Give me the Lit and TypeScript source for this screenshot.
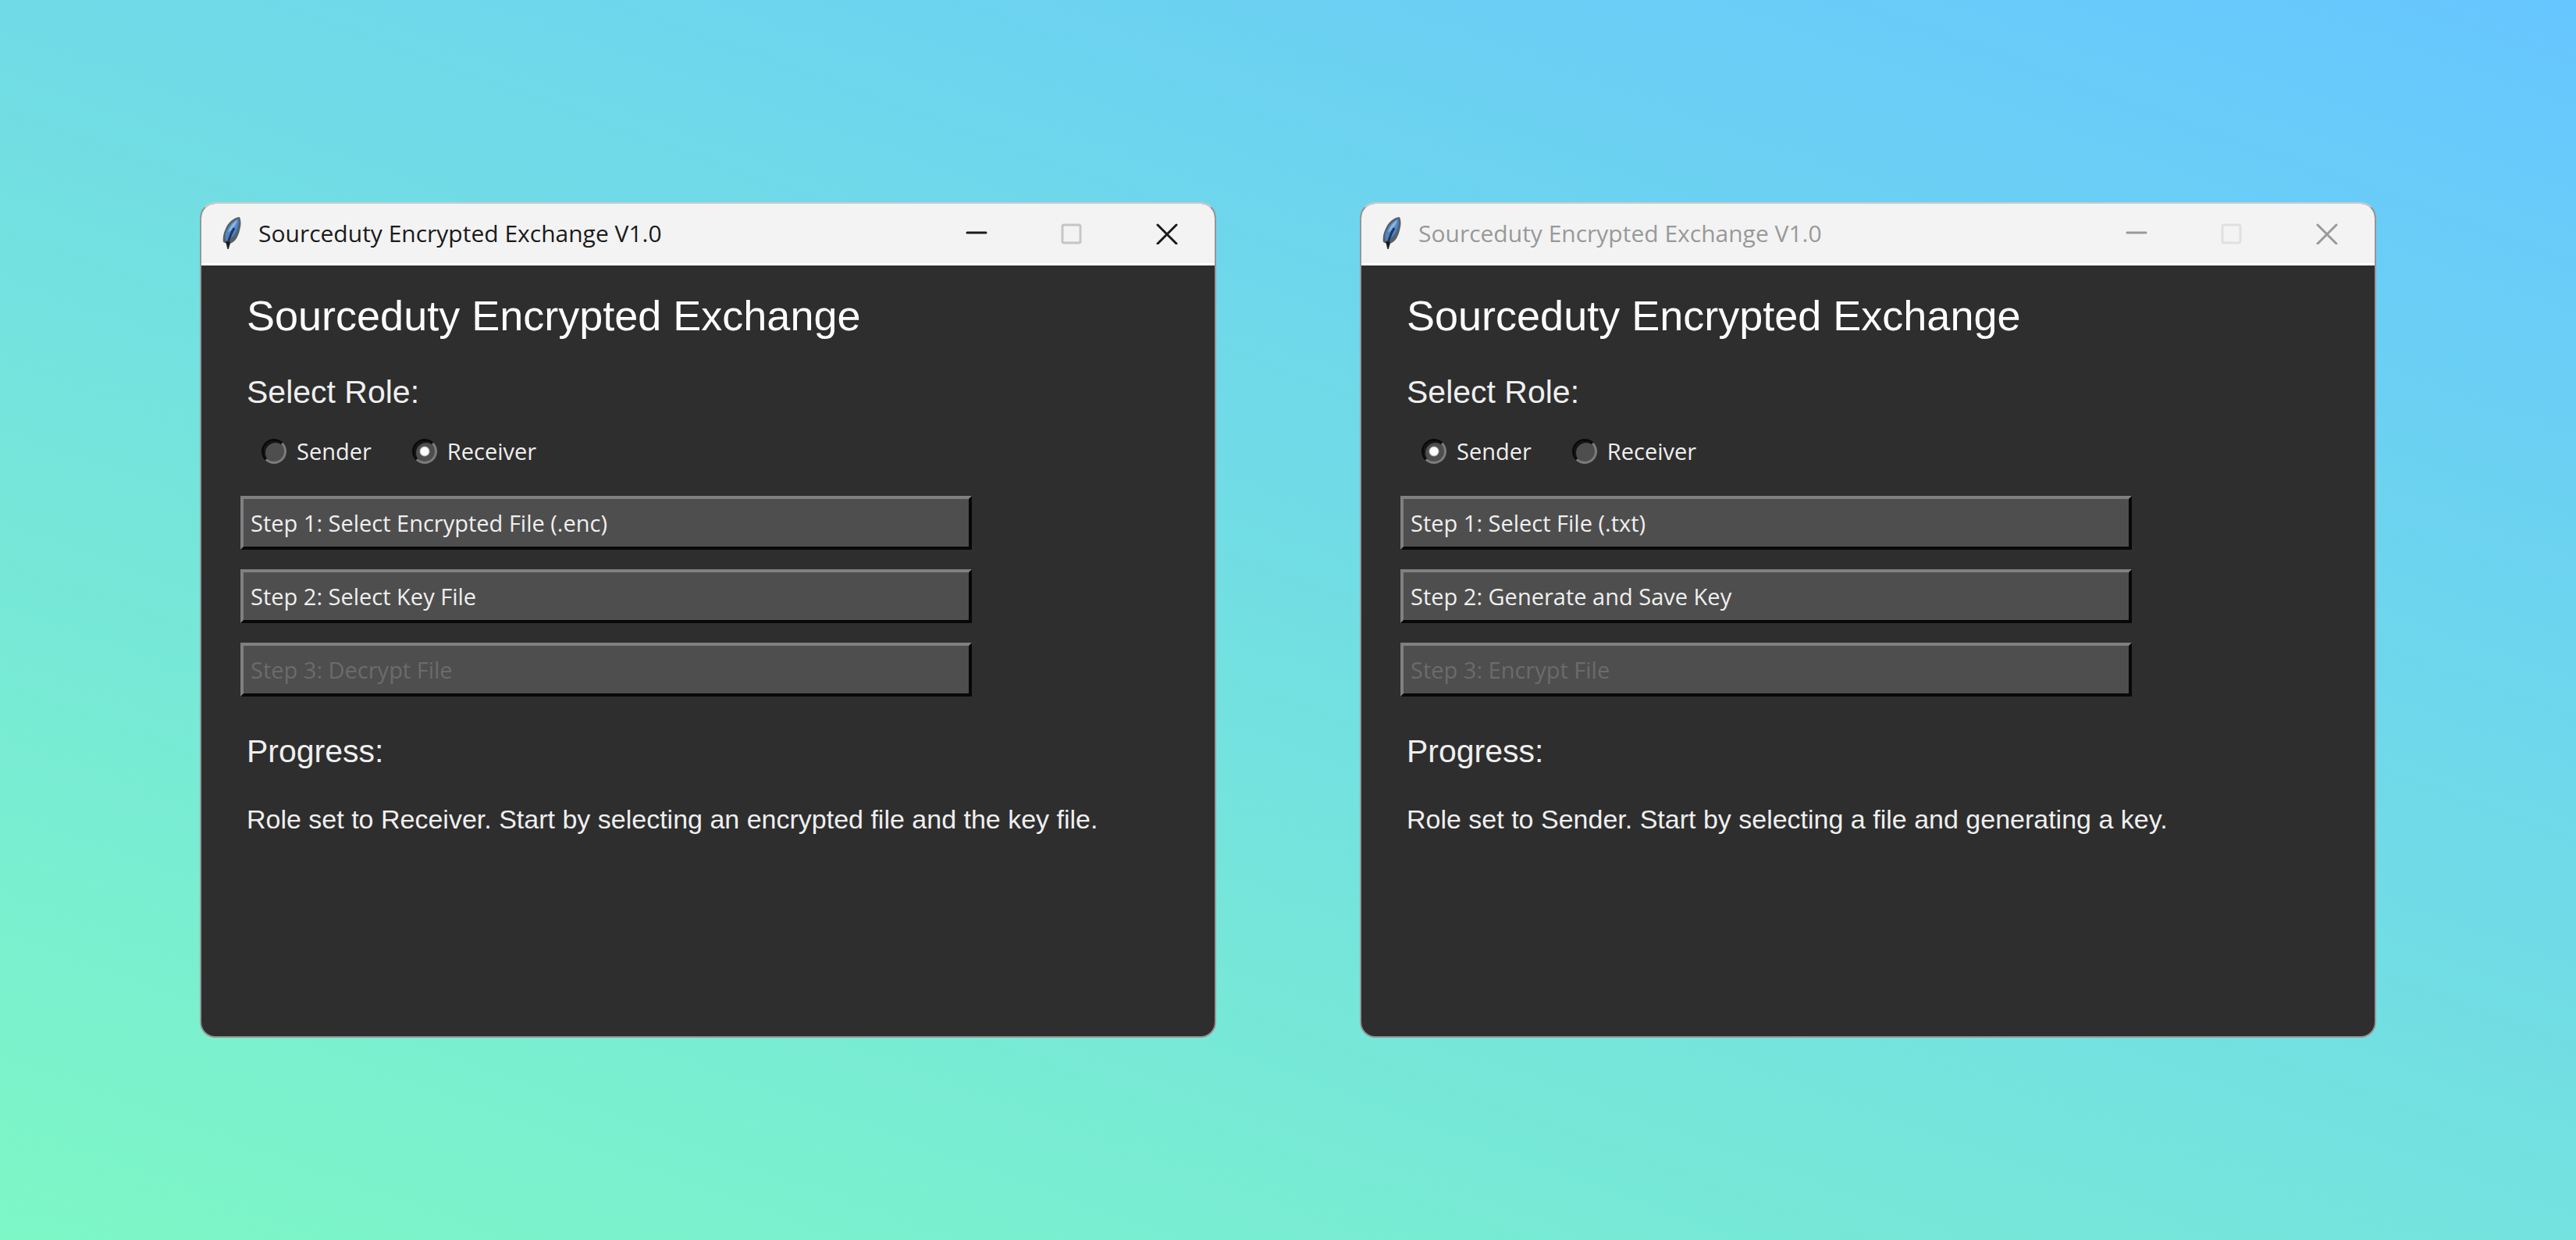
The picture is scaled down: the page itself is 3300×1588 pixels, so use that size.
import { LitElement, html, css } from "lit";
import { customElement, property, state } from "lit/decorators.js";
import { classMap } from "lit/directives/class-map.js";

type Role = "sender" | "receiver";

const ROLES: { id: Role; label: string }[] = [
  { id: "sender", label: "Sender" },
  { id: "receiver", label: "Receiver" },
];

const STEPS: Record<Role, string[]> = {
  sender: ["Step 1: Select File (.txt)", "Step 2: Generate and Save Key", "Step 3: Encrypt File"],
  receiver: ["Step 1: Select Encrypted File (.enc)", "Step 2: Select Key File", "Step 3: Decrypt File"],
};

const STATUS: Record<Role, string> = {
  sender: "Role set to Sender. Start by selecting a file and generating a key.",
  receiver: "Role set to Receiver. Start by selecting an encrypted file and the key file.",
};

@customElement("exchange-window")
class ExchangeWindow extends LitElement {
  static styles = css`
    :host {
      display: block;
      min-width: 0;
    }
    .window {
      border: 2px solid #969696;
      border-top-color: #cccccc;
      border-radius: 20px;
      overflow: hidden;
      background: #2e2e2e;
      color: #efefef;
      font-family: "Liberation Sans", Arial, sans-serif;
    }
    .titlebar {
      display: flex;
      align-items: stretch;
      height: 76px;
      padding-left: 27px;
      background: #f3f3f3;
      border-bottom: 3px solid #ffffff;
      color: #1b1b1b;
      font-family: "Open Sans", "Noto Sans", sans-serif;
    }
    .name {
      display: flex;
      align-items: center;
      gap: 22px;
      flex: 1;
      min-width: 0;
      font-size: 30px;
      line-height: 40px;
      white-space: nowrap;
    }
    .feather {
      flex: none;
      width: 24px;
      height: 42px;
    }
    .control {
      display: flex;
      align-items: center;
      justify-content: center;
      width: 122px;
      padding: 0;
      border: 0;
      background: none;
      color: inherit;
    }
    .control svg {
      width: 28px;
      height: 28px;
      fill: none;
      stroke: currentColor;
      stroke-width: 3;
      stroke-linecap: round;
    }
    .control:disabled {
      color: #c6c6c6;
    }
    .inactive {
      color: #999999;
    }
    .inactive .control:disabled {
      color: #e0e0e0;
    }
    .body {
      padding: 34px 50px 258px;
    }
    .heading,
    .caption,
    .status {
      margin: 0;
      padding: 0 8px;
      font-weight: 400;
    }
    .heading {
      font-size: 54px;
      line-height: 60px;
      color: #ffffff;
    }
    .caption {
      font-size: 41px;
      line-height: 48px;
    }
    .roles {
      margin: 44px 0 0;
      padding: 0;
      border: 0;
      min-width: 0;
    }
    .options {
      display: flex;
      gap: 52px;
      padding: 31px 27px 0;
    }
    .option {
      display: flex;
      align-items: center;
      gap: 13px;
      font-family: "Open Sans", "Noto Sans", sans-serif;
      font-size: 29px;
      line-height: 42px;
    }
    .radio {
      appearance: none;
      box-sizing: border-box;
      width: 32px;
      height: 32px;
      margin: 0;
      border: 3px solid;
      border-color: #0a0a0a #7c7c7c #7c7c7c #0a0a0a;
      border-radius: 50%;
      background: #4e4e4e;
      box-shadow: inset 2px 2px 0 #141414;
    }
    .radio:checked {
      background: radial-gradient(circle, #ffffff 5px, #4e4e4e 7px);
    }
    .steps {
      display: grid;
      gap: 25px;
      max-width: 937px;
      margin-top: 36px;
    }
    .step {
      height: 69px;
      padding: 0 9px;
      border: 4px solid;
      border-color: #808080 #080808 #080808 #808080;
      background: #4e4e4e;
      color: #efefef;
      font-family: "Open Sans", "Noto Sans", sans-serif;
      font-size: 29px;
      line-height: 40px;
      text-align: left;
    }
    .step:disabled {
      color: #6b6b6b;
    }
    .progress {
      margin-top: 46px;
    }
    .status {
      margin-top: 43px;
      font-size: 34px;
      line-height: 40px;
    }
  `;

  @property() initialRole: Role = "sender";
  @property({ type: Boolean }) active = false;
  @state() private chosen?: Role;

  render() {
    const role = this.chosen ?? this.initialRole;
    return html`
      <section class="window">
        <header class=${classMap({ titlebar: true, inactive: !this.active })}>
          <div class="name">
            <svg class="feather" viewBox="0 0 24 42" aria-hidden="true">
              <path d="M22 0C15 0 7 7 4 15c-3 6-4 12-3 17l4 2 1 7 2 0 2-7c7-3 10-9 12-17 2-7 2-12 0-17z" fill="#56616c" />
              <path d="M20 2C13 5 8 11 5 18c-2 5-2 9 0 13 7-4 12-9 14-16 1-4 3-9 1-13z" fill="#4f86c6" />
              <path d="M19 4c-6 3-10 9-12 16 5-4 10-8 12-16z" fill="#8db4de" />
              <path d="M15 14C12 19 9 25 7 34" fill="none" stroke="#20365f" stroke-width="3" />
              <path d="M4 31l3 10 3-9z" fill="#1c1a16" />
            </svg>
            <span>Sourceduty Encrypted Exchange V1.0</span>
          </div>
          <button class="control" aria-label="Minimize">
            <svg viewBox="0 0 28 28"><path d="M2 13h24" /></svg>
          </button>
          <button class="control" aria-label="Maximize" disabled>
            <svg viewBox="0 0 28 28"><rect x="2" y="3" width="23" height="23" rx="2" /></svg>
          </button>
          <button class="control" aria-label="Close">
            <svg viewBox="0 0 28 28"><path d="M2 3l24 24M26 3L2 27" /></svg>
          </button>
        </header>
        <div class="body">
          <h1 class="heading">Sourceduty Encrypted Exchange</h1>
          <fieldset class="roles">
            <legend class="caption">Select Role:</legend>
            <div class="options">
              ${ROLES.map(
                (r) => html`<label class="option">
                  <input
                    class="radio"
                    type="radio"
                    name="role"
                    .checked=${r.id === role}
                    @change=${() => (this.chosen = r.id)}
                  />${r.label}
                </label>`
              )}
            </div>
          </fieldset>
          <div class="steps">
            ${STEPS[role].map((s, i) => html`<button class="step" ?disabled=${i === 2}>${s}</button>`)}
          </div>
          <h2 class="caption progress">Progress:</h2>
          <p class="status" role="status">${STATUS[role]}</p>
        </div>
      </section>
    `;
  }
}

@customElement("app-root")
class AppRoot extends LitElement {
  static styles = css`
    :host {
      display: grid;
      grid-template-columns: 1fr 1fr;
      align-items: center;
      gap: 184px;
      box-sizing: border-box;
      min-height: 100vh;
      padding: 0 256px;
      background: linear-gradient(20deg, #7ef7c6, #66c6ff);
    }
  `;

  render() {
    return html`
      <exchange-window .initialRole=${"receiver"} active></exchange-window>
      <exchange-window .initialRole=${"sender"}></exchange-window>
    `;
  }
}
